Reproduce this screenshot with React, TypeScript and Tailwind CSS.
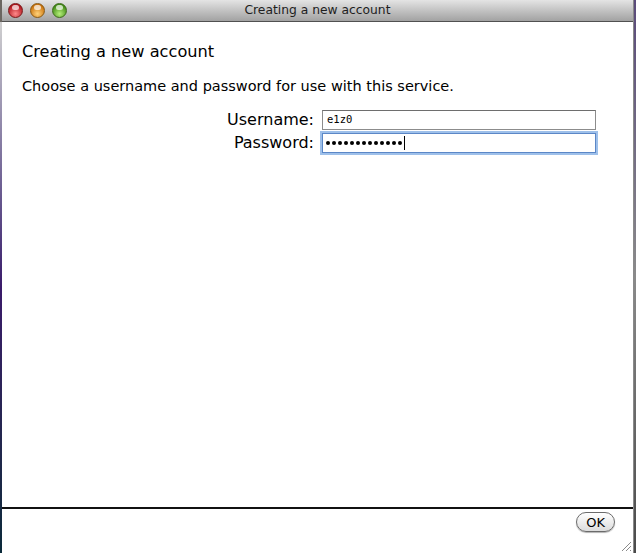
import React from 'react';

function TrafficLight({ from, to, ring }: { from: string; to: string; ring: string }) {
  return (
    <div
      className={`w-[15px] h-[15px] rounded-full border ${ring} relative`}
      style={{ background: `radial-gradient(circle at 50% 75%, ${to} 0%, ${from} 75%)` }}
    >
      <div className="absolute left-[3px] top-[1px] w-[7px] h-[5px] rounded-full bg-white/70" />
    </div>
  );
}

export default function App() {
  return (
    <div className="w-[636px] h-[553px] flex bg-[#1a0f3a] overflow-hidden" style={{ fontFamily: '"DejaVu Sans", "Liberation Sans", sans-serif' }}>
      {/* desktop strip left */}
      <div className="w-[2px] flex flex-col">
        <div className="h-[22px] bg-[#6b6660]" />
        <div className="flex-1 bg-gradient-to-b from-[#d0d0d0] via-[#3a1a6a] to-[#0a2a3a]" />
      </div>

      {/* window */}
      <div className="w-[632px] flex flex-col bg-white border-r border-[#8a8a8a]">
        {/* title bar */}
        <div className="h-[22px] relative flex items-center justify-center bg-gradient-to-b from-[#e4e4e4] to-[#a2a2a2] border-b border-[#515151]">
          <div className="absolute left-[6px] top-[3px] flex gap-[7px]">
            <TrafficLight from="#b0141c" to="#ff8a8a" ring="border-[#7a1a1a]" />
            <TrafficLight from="#c8700a" to="#ffd27a" ring="border-[#8a5a12]" />
            <TrafficLight from="#3f8a14" to="#b6ef7a" ring="border-[#3d6a1a]" />
          </div>
          <span className="text-[12.3px] text-[#1e1e1e]">Creating a new account</span>
        </div>

        {/* content */}
        <div className="flex-1 flex flex-col pl-[20px] pt-[20px]">
          <div className="text-[16.2px] leading-[20px] text-black">Creating a new account</div>
          <div className="mt-[15px] text-[14.5px] leading-[18px] text-black">
            Choose a username and password for use with this service.
          </div>

          <div className="mt-[15px] grid grid-cols-[292px_274px] gap-x-[8px] gap-y-[3px] items-center">
            <div className="text-right text-[16px] leading-[20px] text-black">Username:</div>
            <div className="h-[20px] border border-[#8c8c8c] border-t-[#6e6e6e] flex items-center px-[4px] text-[10.5px] text-black" style={{ fontFamily: '"DejaVu Sans Mono", monospace' }}>
              e1z0
            </div>
            <div className="text-right text-[16px] leading-[20px] text-black">Password:</div>
            <div className="h-[20px] border border-[#5b87c7] shadow-[0_0_0_2px_#9ec0ea] flex items-center px-[3px]">
              <div className="flex gap-[2px]">
                {Array.from({ length: 13 }).map((_, i) => (
                  <div key={i} className="w-[4px] h-[4px] rounded-full bg-black" />
                ))}
              </div>
              <span className="ml-[2px] w-px h-[14px] bg-black" />
            </div>
          </div>
        </div>

        {/* footer */}
        <div className="h-[46px] border-t-2 border-[#111] relative flex justify-end items-start pr-[18px] pt-[3px]">
          <button className="h-[20px] px-[9px] rounded-full border border-[#6b6b6b] bg-gradient-to-b from-white to-[#dcdcdc] text-[13px] leading-none text-black shadow-[0_1px_1px_rgba(0,0,0,0.3)]">
            OK
          </button>
          <svg className="absolute right-[1px] bottom-[1px]" width="12" height="12" viewBox="0 0 12 12">
            <path d="M11 2 L2 11 M11 6 L6 11 M11 10 L10 11" stroke="#8a8a8a" strokeWidth="1" />
          </svg>
        </div>
      </div>

      {/* desktop strip right */}
      <div className="w-[2px] bg-gradient-to-b from-[#5a4a7a] via-[#8a8a8a] to-[#4a4a4a]" />
    </div>
  );
}
